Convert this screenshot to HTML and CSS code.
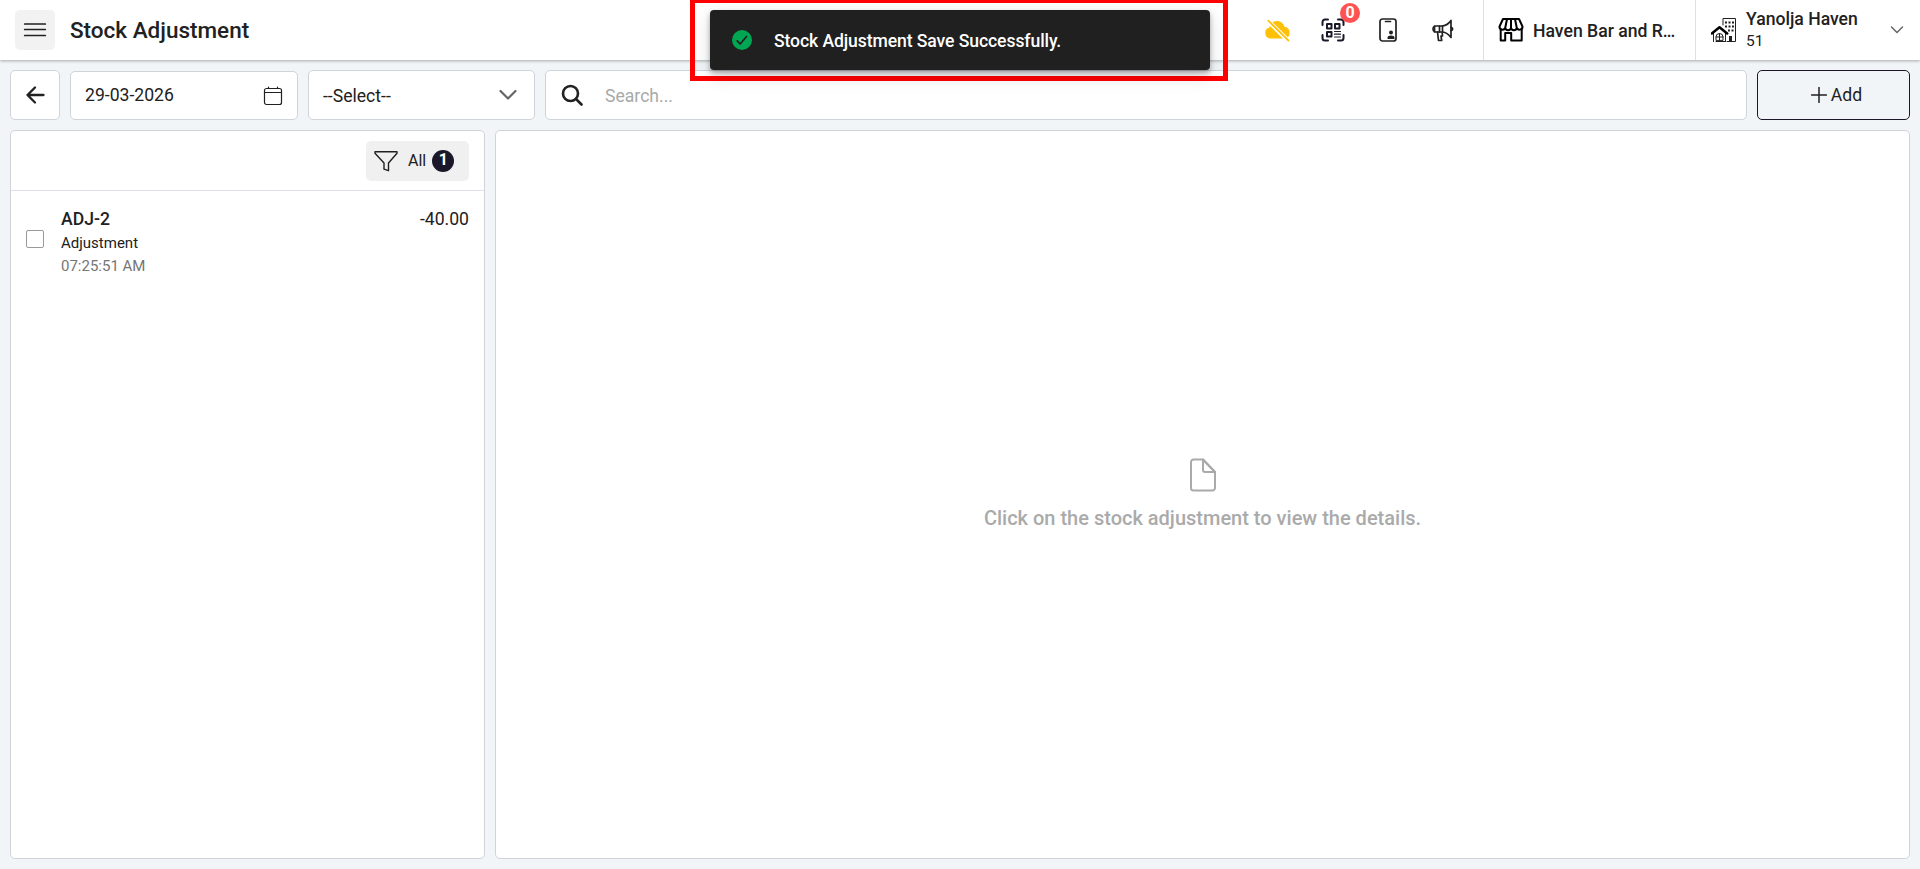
FILE: index.html
```html
<!DOCTYPE html>
<html lang="en">
<head>
    <meta charset="UTF-8">
    <meta name="viewport" content="width=device-width, initial-scale=1.0">
    <title>Stock Adjustment</title>
    <link rel="stylesheet" href="styles.css">
</head>
<body>

<div class="header">
    <button class="menu-button">
        <svg width="24" height="24" viewBox="0 0 24 24"><path d="M1.700 6h20.600M1.700 11.500h20.600M1.700 17.500h20.600"/></svg>
    </button>
    <h1>Stock Adjustment</h1>
    <div class="header-icons">
        <button class="icon-button cloud">
            <svg width="26" height="24" viewBox="0 0 26 24">
                <path class="cloud-shape" d="M6 20.500a5.600 5.600 0 0 1-1.600-11C5 5.500 8.200 3 12 3c3.600 0 6.500 2.300 7.400 5.700A6 6 0 0 1 20 20.500z"/>
                <path class="cloud-gap" d="M1.500 1.500l22 21.500"/>
                <path class="cloud-slash" d="M3.200 2.600l20.300 20"/>
            </svg>
        </button>
        <button class="icon-button">
            <svg class="qr" width="24" height="24" viewBox="0 0 24 24">
                <path d="M1.500 7V4a2.500 2.500 0 0 1 2.500-2.500h3M17 1.500h3A2.500 2.500 0 0 1 22.500 4v3M22.500 17v3a2.500 2.500 0 0 1-2.500 2.500h-3M7 22.500H4A2.500 2.500 0 0 1 1.500 20v-3"/>
                <rect x="6" y="6" width="4.500" height="4.500"/>
                <rect x="14" y="6" width="4.500" height="4.500"/>
                <rect x="6" y="14" width="4.500" height="4.500"/>
                <path class="thin" d="M13.500 13.500h6M13.500 16.200h6M13.500 19h6"/>
            </svg>
            <span class="badge">0</span>
        </button>
        <button class="icon-button">
            <svg width="20" height="26" viewBox="0 0 20 26">
                <rect x="2" y="2" width="16" height="22" rx="2.500"/>
                <path d="M7.500 4.500h5"/>
                <circle class="fill" cx="13" cy="15.500" r="2"/>
                <path class="fill" d="M9.500 22v-1.200c0-1.500 1.500-2.300 3.500-2.300s3.500.8 3.500 2.300V22z"/>
            </svg>
        </button>
        <button class="icon-button">
            <svg width="24" height="24" viewBox="0 0 24 24">
                <path d="M3.500 8h7c4 0 7-2 9.500-5.500v17C17.500 16 14.500 14 10.500 14h-7z"/>
                <path d="M8.500 8v6M11.500 8v6M3.500 8.500c-2 .5-2 4.500 0 5M20 9.500c2.200 0 2.200 3 0 3M6.500 14l1 8.500h3.200L10 18h1.500l-.3-4"/>
            </svg>
        </button>
    </div>
    <div class="outlet">
        <svg width="26" height="26" viewBox="0 0 26 26">
            <path d="M5 2h16l3.500 7.500a3 3 0 0 1-5.700 1.500 3 3 0 0 1-5.800 0 3 3 0 0 1-5.800 0A3 3 0 0 1 1.500 9.500zM9 2L7.300 10.500M13 2v8.500M17 2l1.700 8.500"/>
            <path d="M2.700 12.500V23.500h4.500V16h6v7.500h10.500V12.500"/>
        </svg>
        <span>Haven Bar and R…</span>
    </div>
    <div class="property">
        <svg width="26" height="26" viewBox="0 0 26 26">
            <path class="line" d="M12 8V1.500h12.500v23H16M2.500 16v8.500M14.500 15v9.500M5 24.500h9"/>
            <path class="roof" d="M.8 16.500l7.700-6.300 7.700 6.300"/>
            <path class="line" d="M5 23v-3a3.500 3.500 0 0 1 7 0v3zM8.500 16.500V23M5 20h7"/>
            <path class="windows" d="M14 5.500h9M14 9.500h9M17 13.500h6"/>
            <path class="fill" d="M18 19h3v5.500h-3z"/>
        </svg>
        <div class="property-text">
            <strong>Yanolja Haven</strong>
            <span>51</span>
        </div>
        <svg class="chevron" width="14" height="14" viewBox="0 0 14 14"><path d="M1.500 4l5.500 5.500L12.500 4"/></svg>
    </div>
</div>

<div class="toolbar">
    <button class="back-button">
        <svg width="20" height="20" viewBox="0 0 20 20"><path d="M10 2.500L2.500 10l7.500 7.500M2.500 10h16"/></svg>
    </button>
    <div class="field date-field">
        <span>29-03-2026</span>
        <svg width="20" height="20" viewBox="0 0 20 20">
            <rect x="1.500" y="2.500" width="17" height="16" rx="2"/>
            <path d="M1.500 6.500h17M5.500 1v1.500M14.500 1v1.500"/>
        </svg>
    </div>
    <div class="field select-field">
        <span>--Select--</span>
        <svg width="18" height="12" viewBox="0 0 18 12"><path d="M1.500 2L9 9.500 16.500 2"/></svg>
    </div>
    <div class="field search-field">
        <svg width="22" height="22" viewBox="0 0 22 22"><circle cx="9.500" cy="9.500" r="7.500"/><path d="M15 15l5.500 5.500"/></svg>
        <input type="text" placeholder="Search...">
    </div>
    <button class="add-button">
        <svg width="16" height="16" viewBox="0 0 16 16"><path d="M8 .5v15M.5 8h15"/></svg>
        <span>Add</span>
    </button>
</div>

<div class="content">
    <div class="list-panel">
        <div class="list-head">
            <button class="filter-button">
                <svg width="24" height="22" viewBox="0 0 24 22"><path d="M1 1.700h22v1.500L14.500 13v7.700l-4.500-1.500V13L1 3.200z"/></svg>
                <span class="filter-label">All</span>
                <span class="count">1</span>
            </button>
        </div>
        <div class="list-item">
            <input type="checkbox" class="check">
            <div class="item-info">
                <div class="item-code">ADJ-2</div>
                <div class="item-type">Adjustment</div>
                <div class="item-time">07:25:51 AM</div>
            </div>
            <div class="item-qty">-40.00</div>
        </div>
    </div>
    <div class="detail-panel">
        <svg width="28" height="34" viewBox="0 0 28 34">
            <path d="M14 1.500H4.500A2.500 2.500 0 0 0 2 4v26a2.500 2.500 0 0 0 2.500 2.500h19A2.500 2.500 0 0 0 26 30V14z"/>
            <path d="M14 1.500V12a2 2 0 0 0 2 2h10z"/>
        </svg>
        <p>Click on the stock adjustment to view the details.</p>
    </div>
</div>

<div class="toast-frame">
    <div class="toast">
        <svg width="20" height="20" viewBox="0 0 20 20"><circle cx="10" cy="10" r="10"/><path d="M5.200 10.800l3 3.200 6.300-7.500"/></svg>
        <span>Stock Adjustment Save Successfully.</span>
    </div>
</div>

</body>
</html>
```

FILE: styles.css
```css
* {
    box-sizing: border-box;
}

body {
    font-family: Roboto, Arial, sans-serif;
    font-size: 17.6px;
    color: #212121;
    background-color: #f1f5f8;
    margin: 0;
    display: flex;
    flex-direction: column;
    height: 100vh;
    overflow: hidden;
}

button {
    font-family: inherit;
    font-size: inherit;
    color: inherit;
    border: none;
    padding: 0;
    cursor: pointer;
}

svg {
    display: block;
    flex-shrink: 0;
    fill: none;
    stroke: #212121;
    stroke-width: 1.7;
    stroke-linecap: round;
    stroke-linejoin: round;
}

svg .fill {
    fill: #212121;
    stroke: none;
}

.header {
    height: 60px;
    flex-shrink: 0;
    background-color: white;
    display: flex;
    align-items: center;
    padding-left: 15px;
    box-shadow: 0 1px 3px rgba(0, 0, 0, 0.3);
}

.menu-button {
    width: 40px;
    height: 40px;
    background-color: #f2f2f2;
    border-radius: 5px;
    display: flex;
    align-items: center;
    justify-content: center;
}

.header h1 {
    font-size: 22.5px;
    font-weight: 500;
    margin: 0 0 0 15px;
}

.header-icons {
    margin-left: auto;
    margin-right: 20px;
    display: flex;
    gap: 15px;
}

.icon-button {
    position: relative;
    width: 40px;
    height: 40px;
    background: none;
    display: flex;
    align-items: center;
    justify-content: center;
}

.cloud .cloud-shape {
    fill: #ffc107;
    stroke: none;
}

.cloud .cloud-gap {
    stroke: white;
    stroke-width: 4.5;
}

.cloud .cloud-slash {
    stroke: #ffc107;
    stroke-width: 1.8;
}

.qr {
    stroke: #1b1728;
    stroke-width: 2;
}

.qr .thin {
    stroke-width: 1.2;
}

.badge {
    position: absolute;
    top: -7px;
    right: -7px;
    width: 20px;
    height: 20px;
    border-radius: 50%;
    background-color: #ff5252;
    color: white;
    font-size: 16px;
    font-weight: 700;
    line-height: 19px;
    text-align: center;
}

.outlet {
    width: 212px;
    height: 60px;
    border-left: 1px solid #e0e0e0;
    display: flex;
    align-items: center;
    gap: 9px;
    padding: 0 10px 0 14px;
    font-weight: 500;
}

.outlet svg {
    stroke: #000;
    stroke-width: 2;
}

.outlet span {
    padding-top: 2px;
    white-space: nowrap;
}

.property {
    width: 225px;
    height: 60px;
    border-left: 1px solid #e0e0e0;
    display: flex;
    align-items: center;
    padding: 0 16px 0 15px;
}

.property .line {
    stroke-width: 1;
}

.property .roof {
    stroke: #000;
    stroke-width: 2.5;
}

.property .windows {
    stroke-width: 2;
    stroke-linecap: butt;
    stroke-dasharray: 2 1.5;
}

.property-text {
    display: flex;
    flex-direction: column;
    margin-left: 9px;
    padding-top: 1px;
}

.property-text strong {
    font-weight: 500;
    line-height: 21px;
}

.property-text span {
    font-size: 15.5px;
    line-height: 22px;
}

.property .chevron {
    margin-left: auto;
    stroke: #666;
    stroke-width: 1.5;
}

.toolbar {
    display: flex;
    align-items: stretch;
    gap: 10px;
    height: 50px;
    flex-shrink: 0;
    margin: 10px 10px 0;
}

.back-button {
    width: 50px;
    background-color: white;
    border: 1px solid #ced4da;
    border-radius: 5px;
    display: flex;
    align-items: center;
    justify-content: center;
}

.back-button svg {
    stroke-width: 2.3;
}

.field {
    background-color: white;
    border: 1px solid #ced4da;
    border-radius: 5px;
    display: flex;
    align-items: center;
    justify-content: space-between;
    padding: 0 14px;
}

.date-field {
    width: 228px;
    margin-top: 1px;
}

.date-field span {
    padding-bottom: 1px;
}

.date-field svg {
    stroke-width: 1.2;
}

.select-field {
    width: 227px;
    padding-right: 17px;
}

.select-field span {
    padding-top: 2px;
}

.select-field svg {
    stroke: #666;
    stroke-width: 2.2;
}

.search-field {
    flex: 1;
    justify-content: flex-start;
    gap: 22px;
    padding-left: 15px;
}

.search-field svg {
    stroke-width: 2.6;
}

.search-field input {
    flex: 1;
    border: none;
    outline: none;
    padding: 2px 0 0;
    font-family: inherit;
    font-size: 17.6px;
}

.search-field input::placeholder {
    color: #a9a9a9;
}

.add-button {
    width: 153px;
    background: none;
    border: 1px solid #1b1728;
    border-radius: 5px;
    display: flex;
    align-items: center;
    justify-content: center;
    gap: 4px;
    padding-left: 6px;
}

.add-button svg {
    stroke-width: 1.5;
}

.content {
    flex: 1;
    display: flex;
    gap: 10px;
    padding: 10px;
}

.list-panel,
.detail-panel {
    background-color: white;
    border: 1px solid #ced4da;
    border-radius: 5px;
}

.list-panel {
    width: 475px;
}

.list-head {
    height: 60px;
    border-bottom: 1px solid #dee2e6;
    display: flex;
    justify-content: flex-end;
    padding: 10px 15px;
}

.filter-button {
    width: 103px;
    height: 40px;
    background-color: #f0f0f0;
    border-radius: 5px;
    display: flex;
    align-items: center;
    padding-left: 8px;
    font-size: 16px;
}

.filter-button svg {
    margin-right: 10px;
    stroke-width: 1.4;
}

.filter-label {
    padding-bottom: 1px;
}

.count {
    width: 22px;
    height: 22px;
    margin-left: 6px;
    border-radius: 50%;
    background-color: #1b1728;
    color: white;
    font-weight: 700;
    line-height: 20px;
    text-align: center;
}

.list-item {
    display: flex;
    align-items: center;
    padding: 15px;
}

.check {
    appearance: none;
    width: 18px;
    height: 18px;
    margin: 0 17px 7px 0;
    border: 1px solid #999;
    border-radius: 2px;
}

.item-code {
    font-weight: 500;
    line-height: 26px;
}

.item-type,
.item-time {
    font-size: 15px;
    line-height: 23px;
}

.item-time {
    color: #757575;
}

.item-qty {
    margin-left: auto;
    align-self: flex-start;
    line-height: 26px;
}

.detail-panel {
    flex: 1;
    display: flex;
    flex-direction: column;
    align-items: center;
    justify-content: center;
    padding-bottom: 2px;
}

.detail-panel svg {
    stroke: #aaa;
    stroke-width: 2;
}

.detail-panel p {
    margin: 14px 0 0;
    color: #aaa;
    font-size: 20px;
    font-weight: 500;
}

.toast-frame {
    position: absolute;
    top: -2px;
    left: 690px;
    width: 538px;
    height: 83px;
    border: 5px solid #f00;
    padding: 7px 13px 5px 15px;
}

.toast {
    width: 500px;
    height: 60px;
    border-radius: 4px;
    background-color: #202020;
    color: white;
    display: flex;
    align-items: center;
    gap: 22px;
    padding: 0 22px;
    font-weight: 500;
    letter-spacing: -0.1px;
    box-shadow: 0 3px 5px rgba(0, 0, 0, 0.3), 0 6px 18px rgba(0, 0, 0, 0.15);
}

.toast span {
    padding-top: 2px;
}

.toast circle {
    fill: #00a651;
    stroke: none;
}

.toast path {
    stroke: #202020;
}
```
